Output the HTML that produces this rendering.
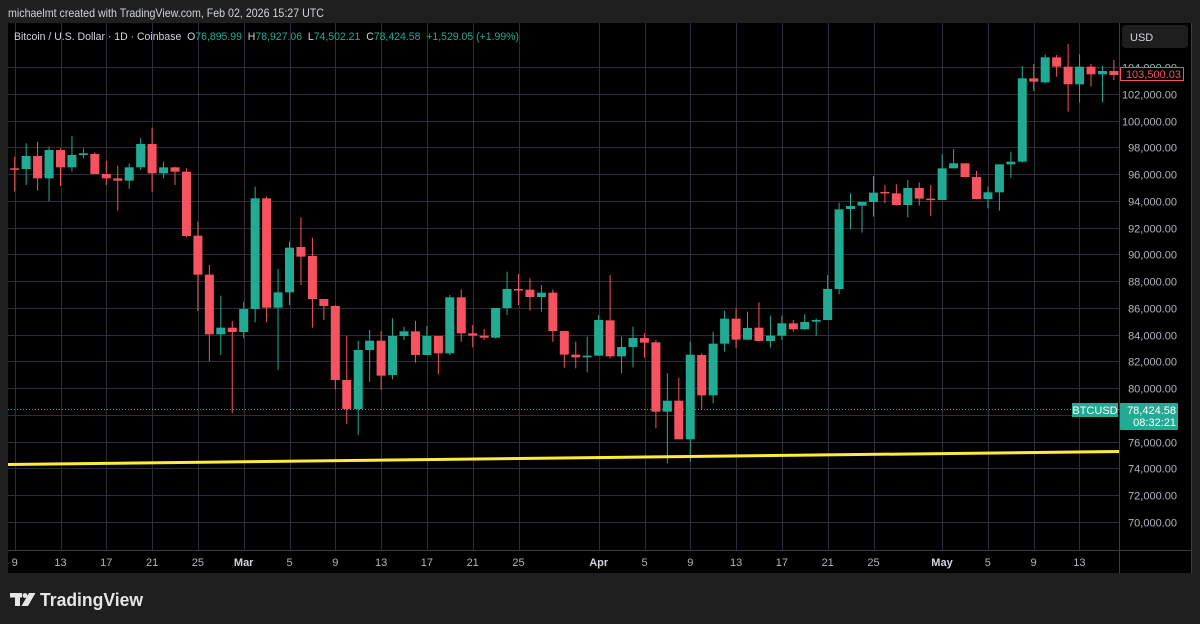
<!DOCTYPE html>
<html><head><meta charset="utf-8">
<style>
html,body{margin:0;padding:0;background:#1f1f1f;width:1200px;height:624px;overflow:hidden;font-family:"Liberation Sans",sans-serif;}
</style></head>
<body>
<svg id="s" width="1200" height="624" xmlns="http://www.w3.org/2000/svg" style="position:absolute;left:0;top:0">
<rect x="0" y="0" width="1200" height="624" fill="#1f1f1f"/>
<text x="8" y="17" font-size="12" fill="#d1d4dc" textLength="316" lengthAdjust="spacingAndGlyphs" font-family="Liberation Sans, sans-serif">michaelmt created with TradingView.com, Feb 02, 2026 15:27 UTC</text>
<rect x="8" y="23" width="1184" height="550" fill="#000"/>
<g id="grid" stroke="#2a2e39" stroke-width="1"></g>
<line x1="1119.5" y1="23" x2="1119.5" y2="573" stroke="#3a3d45"/>
<line x1="8" y1="550.5" x2="1192" y2="550.5" stroke="#3a3d45"/>
<line x1="1191.5" y1="23" x2="1191.5" y2="573" stroke="#3a3d45"/>
<line x1="8" y1="409.5" x2="1119" y2="409.5" stroke="#22ab94" stroke-dasharray="1,2" stroke-width="1"/>
<g id="candles"></g>
<line x1="8" y1="464.5" x2="1119" y2="451.5" stroke="#ffeb3b" stroke-width="3"/>
<g id="plabels" font-size="11" fill="#b2b5be" text-anchor="end" font-family="Liberation Sans, sans-serif"></g>
<g id="tlabels" font-size="11" fill="#b2b5be" text-anchor="middle" font-family="Liberation Sans, sans-serif"></g>
<rect x="1122" y="25" width="66" height="23" rx="4" fill="#1e1e1e"/>
<text x="1130" y="41" font-size="11" fill="#d1d4dc">USD</text>
<rect x="1120.5" y="67.5" width="63" height="13" fill="#000" stroke="#f7525f"/>
<text x="1181" y="78" font-size="11" fill="#f7525f" text-anchor="end">103,500.03</text>
<rect x="1072" y="403" width="46" height="14" fill="#22ab94"/>
<text x="1095" y="414" font-size="11" fill="#fff" text-anchor="middle">BTCUSD</text>
<rect x="1120" y="403" width="58" height="27" rx="1" fill="#22ab94"/>
<text x="1176" y="414" font-size="11" fill="#fff" text-anchor="end">78,424.58</text>
<text x="1176" y="426" font-size="11" fill="#fff" text-anchor="end">08:32:21</text>
<text x="14" y="40" font-size="11" textLength="505" lengthAdjust="spacingAndGlyphs" xml:space="preserve" font-family="Liberation Sans, sans-serif"><tspan fill="#d1d4dc">Bitcoin / U.S. Dollar · 1D · Coinbase  O</tspan><tspan fill="#22ab94">76,895.99</tspan><tspan fill="#d1d4dc">  H</tspan><tspan fill="#22ab94">78,927.06</tspan><tspan fill="#d1d4dc">  L</tspan><tspan fill="#22ab94">74,502.21</tspan><tspan fill="#d1d4dc">  C</tspan><tspan fill="#22ab94">78,424.58  +1,529.05 (+1.99%)</tspan></text>
<g fill="#e6e6e6">
<rect x="10" y="593" width="12" height="4.5"/>
<rect x="15" y="593" width="5" height="13"/>
<circle cx="25" cy="595.5" r="2.4"/>
<polygon points="29,593 35.5,593 28,606 21.5,606"/>
</g>
<text x="40" y="606" font-size="18" font-weight="bold" fill="#e6e6e6" textLength="103" lengthAdjust="spacingAndGlyphs" font-family="Liberation Sans, sans-serif">TradingView</text>
</svg>
<script>
var NS="http://www.w3.org/2000/svg";
function el(p,t,a,txt){var e=document.createElementNS(NS,t);for(var k in a)e.setAttribute(k,a[k]);if(txt)e.textContent=txt;p.appendChild(e);return e;}
var grid=document.getElementById('grid');
function py(p){return 522-(p-70000)/2000*26.76;}
var pl=document.getElementById('plabels');
for(var p=70000;p<=104000;p+=2000){var y=Math.round(py(p))+0.5;el(grid,'line',{x1:8,y1:y,x2:1119,y2:y});
 el(pl,'text',{x:1177,y:y+4},(p/1000)+',000.00');}
var tl=document.getElementById('tlabels');
var T=[[14.7,'9'],[60.5,'13'],[106.3,'17'],[152.1,'21'],[197.9,'25'],[243.7,'Mar'],[289.5,'5'],[335.3,'9'],[381.1,'13'],[426.9,'17'],[472.7,'21'],[518.5,'25'],[598.7,'Apr'],[644.5,'5'],[690.3,'9'],[736.1,'13'],[781.9,'17'],[827.7,'21'],[873.5,'25'],[942,'May'],[987.8,'5'],[1033.6,'9'],[1079.4,'13']];
T.forEach(function(t){var x=Math.round(t[0])+0.5;el(grid,'line',{x1:x,y1:23,x2:x,y2:550});
 var a={x:t[0],y:566};if(/[A-Z]/.test(t[1])){a['font-weight']='bold';a.fill='#d1d4dc';}el(tl,'text',a,t[1]);});
var A=[['r',145,149,110,215],['g',108,147,70,195],['r',108,175,65,212],['g',90,175,80,243],['r',90,142,85,198],['g',105,142,48,155],['g',100,105,85,115],['r',102,162,97,162],['r',162,175,122,195],['r',175,182,137,272],['g',142,182,130,207],['g',72,142,55,150],['r',72,160,23,215],['g',142,160,125,175],['r',142,155,140,195],['r',155,348,145,352],['r',347,464,305,573],['r',464,643,435,723],['g',623,643,527,705],['r',623,636,603,880],['g',567,636,545,655],['g',235,567,200,607],['r',235,563,230,607],['g',517,563,447,750],['g',383,517,365,555],['r',381,410,292,495],['r',408,537,353,623],['r',537,558,537,600],['r',558,780,555,808],['r',780,867,648,912],['g',690,867,662,945],['g',662,690,630,785],['r',662,767,633,810]];
var B=[['g',228,345,175,358],['g',214,228,200,240],['r',214,285,183,308],['g',228,285,198,285],['r',228,280,228,343],['g',112,280,105,285],['r',112,220,88,245],['r',220,227,195,262],['r',227,233,207,240],['g',144,233,144,235],['g',87,144,35,165],['r',87,91,42,135],['r',89,111,55,152],['g',98,111,75,155],['r',98,213,88,245],['r',213,284,213,323],['r',284,292,245,325],['g',287,292,230,337],['g',180,287,165,287],['r',181,289,45,295],['g',261,289,230,340],['g',234,261,200,322],['r',234,248,220,293],['r',247,455,240,505],['g',422,455,340,610],['r',422,538,353,538],['g',284,538,245,605],['r',285,406,280,450],['g',251,406,215,430],['g',176,251,152,275],['r',176,239,145,265],['g',204,239,155,240]];
var C=[['r',863,903,787,903],['g',887,903,827,923],['g',850,887,827,900],['r',850,868,840,875],['g',846,868,823,870],['g',840,845,835,887],['g',747,840,705,840],['g',508,747,488,763],['g',498,507,460,568],['g',486,497,486,578],['g',458,486,408,530],['r',456,458,435,490],['r',460,495,433,497],['g',444,495,420,532],['r',444,476,427,497],['r',476,480,435,528],['g',385,480,343,480],['g',370,385,327,385],['r',370,411,370,413],['r',411,477,393,478],['g',457,477,440,505],['g',373,457,373,512],['g',365,373,335,413],['g',115,365,78,368],['r',115,125,72,153],['g',52,127,43,130],['r',52,80,45,110],['r',80,133,12,215],['g',80,133,43,187],['r',80,103,72,140],['g',93,103,78,187],['r',93,105,60,120]];
var all=[];A.forEach(function(c){all.push([c,120]);});B.forEach(function(c){all.push([c,260]);});C.forEach(function(c){all.push([c,40]);});
var cg=document.getElementById('candles');
all.forEach(function(it,i){var c=it[0],o=it[1];var x=14.7+11.45*i;var col=c[0]==='g'?'#22ab94':'#f7525f';
 var bt=o+c[1]/3,bb=o+c[2]/3,wt=o+c[3]/3,wb=o+c[4]/3;if(bb-bt<1.5)bb=bt+1.5;
 el(cg,'line',{x1:x,y1:wt,x2:x,y2:wb,stroke:col,'stroke-width':1});
 el(cg,'rect',{x:x-4.5,y:bt,width:9,height:bb-bt,fill:col});});
</script>
</body></html>
